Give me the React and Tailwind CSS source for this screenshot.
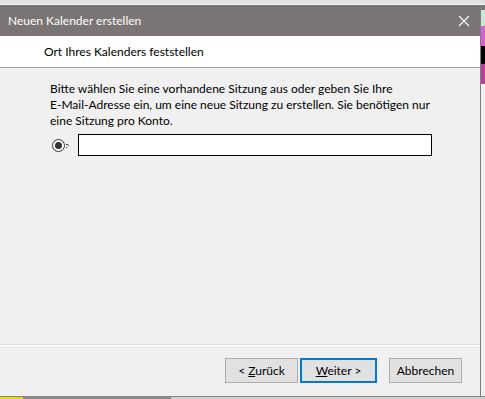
import React from "react";

const font = { fontFamily: "'Segoe UI', Lato, 'Liberation Sans', sans-serif" };

const Btn = ({ children, primary }) => (
  <button
    className={
      primary
        ? "h-[25px] w-[77px] border-2 border-[#0078d7] bg-[#e1e1e1] text-[12px] text-black"
        : "h-[25px] w-[73px] border border-[#adadad] bg-[#e1e1e1] text-[12px] text-black"
    }
  >
    {children}
  </button>
);

const App = () => {
  return (
    <div
      className="flex h-[399px] w-[485px] flex-col overflow-hidden bg-[#f0f0f0] text-[12px]"
      style={font}
    >
      <div className="h-[5px] shrink-0 border-b border-[#f8f8f8] bg-[#e2e2e2]" />
      <div className="flex min-h-0 flex-1">
        <div className="flex w-[481px] flex-col border-r border-[#7f7f7f]">
          <div className="flex h-[31px] shrink-0 items-center justify-between bg-[#7a7574] pl-2 pr-[10px] text-white">
            <span className="text-[12px]">Neuen Kalender erstellen</span>
            <svg width="12" height="12" viewBox="0 0 12 12">
              <path d="M1 1L11 11M11 1L1 11" stroke="#fff" strokeWidth="1.1" />
            </svg>
          </div>
          <div className="flex h-[32px] shrink-0 items-center border-b border-[#a0a0a0] bg-white pl-[44px] text-[12px] text-black">
            Ort Ihres Kalenders feststellen
          </div>
          <div className="flex flex-1 flex-col bg-[#f0f0f0]">
            <div className="pl-[50px] pt-[13px] text-[12px] leading-[16px] text-black">
              <p>Bitte wählen Sie eine vorhandene Sitzung aus oder geben Sie Ihre</p>
              <p>E-Mail-Adresse ein, um eine neue Sitzung zu erstellen. Sie benötigen nur</p>
              <p>eine Sitzung pro Konto.</p>
            </div>
            <div className="mt-[5px] flex items-center pl-[52px]">
              <span className="flex h-[13px] w-[13px] items-center justify-center rounded-full border border-[#333] bg-white">
                <span className="h-[7px] w-[7px] rounded-full bg-[#333]" />
              </span>
              <span className="ml-[1px] mr-[9px] flex h-[3px] w-[3px] flex-wrap justify-between">
                <span className="h-[1px] w-[1px] bg-[#444]" />
                <span className="h-[1px] w-[1px] bg-[#444]" />
                <span className="mt-[1px] h-[1px] w-[1px] bg-[#444]" />
                <span className="mt-[1px] h-[1px] w-[1px] bg-[#444]" />
              </span>
              <div className="h-[22px] w-[354px] border border-black bg-white" />
            </div>
            <div className="flex-1" />
            <div className="h-[1px] bg-[#dcdcdc]" />
            <div className="h-[1px] bg-white" />
            <div className="flex h-[50px] items-start pt-[12px] pl-[225px]">
              <Btn>
                &lt; <u>Z</u>urück
              </Btn>
              <span className="ml-[2px]" />
              <Btn primary>
                <u>W</u>eiter &gt;
              </Btn>
              <span className="ml-[12px]" />
              <Btn>Abbrechen</Btn>
            </div>
          </div>
        </div>
        <div className="flex w-[4px] flex-col">
          <div className="h-[5px] bg-[#7a7574]" />
          <div className="h-[16px] bg-[#c8e6d8]" />
          <div className="h-[20px] bg-[#d85fd0]" />
          <div className="h-[18px] bg-black" />
          <div className="h-[20px] bg-[#b83f9a]" />
          <div className="flex-1 bg-[#f0f0f0]" />
        </div>
      </div>
      <div className="flex h-[3px] shrink-0 border-t border-[#888]">
        <div className="w-[23px] bg-[#e0e000]" />
        <div className="w-[148px] bg-[#888]" />
        <div className="flex-1 bg-[#d0d0d0]" />
      </div>
    </div>
  );
};

export default App;
